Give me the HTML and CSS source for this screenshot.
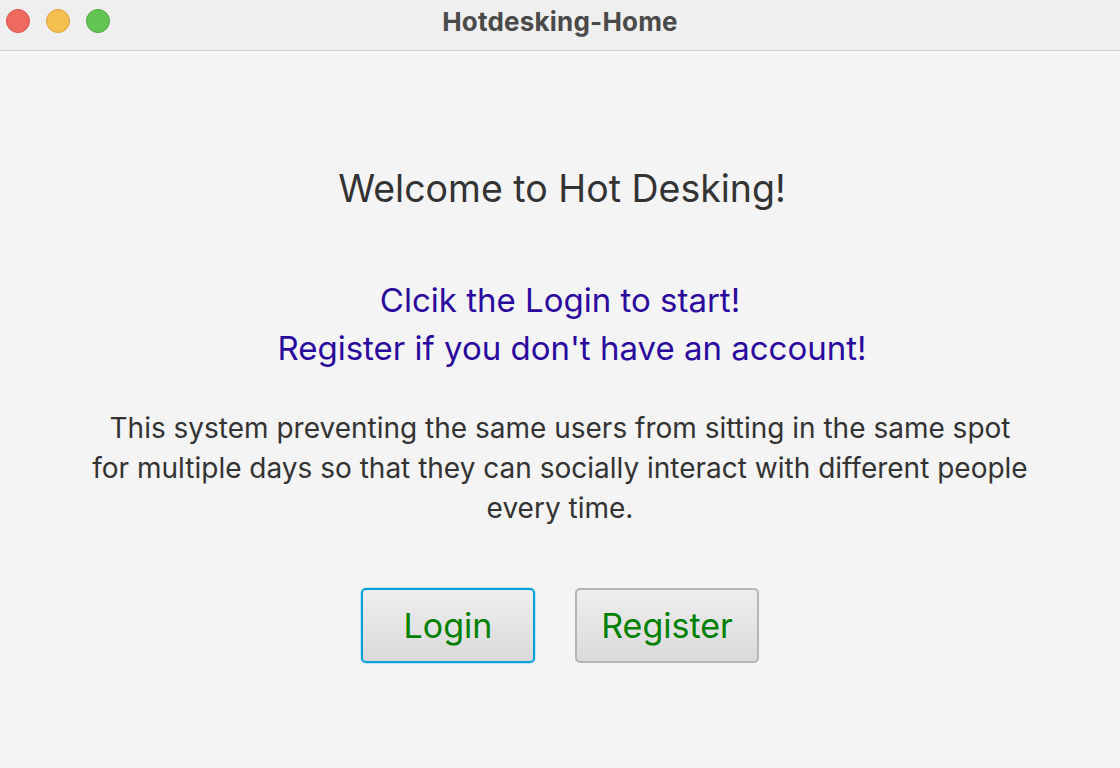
FILE: index.html
```html
<!DOCTYPE html>
<html>
<head>
<meta charset="utf-8">
<link rel="stylesheet" href="styles.css">
</head>
<body>
<div class="window">
  <div class="titlebar">
    <div class="lights">
      <span class="light red"></span>
      <span class="light yellow"></span>
      <span class="light green"></span>
    </div>
    <div class="title">Hotdesking-Home</div>
  </div>
  <div class="content">
    <h1 class="welcome">Welcome to Hot Desking!</h1>
    <div class="prompt">
      <div>Clcik the Login to start!</div>
      <div class="second">Register if you don't have an account!</div>
    </div>
    <p class="desc">This system preventing the same users from sitting in the same spot<br>for multiple days so that they can socially interact with different people<br>every time.</p>
    <div class="buttons">
      <button class="btn login focused">Login</button>
      <button class="btn register">Register</button>
    </div>
  </div>
</div>
</body>
</html>
```

FILE: styles.css
```css
html, body {
  margin: 0;
  padding: 0;
}
body {
  width: 1120px;
  height: 768px;
  overflow: hidden;
  background: #f4f4f4;
  font-family: Inter, "Noto Sans", sans-serif;
}
.window {
  display: flex;
  flex-direction: column;
  height: 768px;
}
.titlebar {
  position: relative;
  height: 50px;
  background: #efefef;
  border-bottom: 1px solid #d3d3d3;
  display: flex;
  align-items: center;
  justify-content: center;
}
.lights {
  position: absolute;
  left: 6px;
  top: 9px;
  display: flex;
  gap: 16px;
}
.light {
  width: 24px;
  height: 24px;
  border-radius: 50%;
  box-sizing: border-box;
}
.red { background: #ee6a5f; border: 1px solid #d4534a; }
.yellow { background: #f5bf4f; border: 1px solid #d9a33a; }
.green { background: #62c554; border: 1px solid #4ca73f; }
.title {
  font-size: 26px;
  font-weight: 700;
  color: #4a4a4a;
  margin-top: -8px;
  letter-spacing: 0.2px;
}
.content {
  flex: 1;
  display: flex;
  flex-direction: column;
  align-items: center;
}
.welcome {
  margin: 116px 0 0 4px;
  font-size: 37.5px;
  font-weight: 400;
  color: #333333;
  line-height: 44px;
}
.prompt {
  margin-top: 65px;
  font-size: 33px;
  color: #2b0b9e;
  line-height: 48px;
  text-align: center;
}
.prompt .second {
  padding-left: 24px;
}
.desc {
  margin: 36px 0 0;
  font-size: 28px;
  color: #333333;
  line-height: 40px;
  text-align: center;
}
.buttons {
  display: flex;
  gap: 40px;
  margin-top: 60px;
}
.btn {
  height: 75px;
  padding: 0;
  font-family: Inter, "Noto Sans", sans-serif;
  font-size: 34px;
  color: #008000;
  background: linear-gradient(#eeeeee, #dadada);
  border: 2px solid #b5b5b5;
  border-radius: 5px;
}
.btn.login { width: 174px; }
.btn.register { width: 184px; }
.btn.focused {
  border-color: #0a9fd8;
  box-shadow: 0 0 0 1px #bfe3f2;
}
```
